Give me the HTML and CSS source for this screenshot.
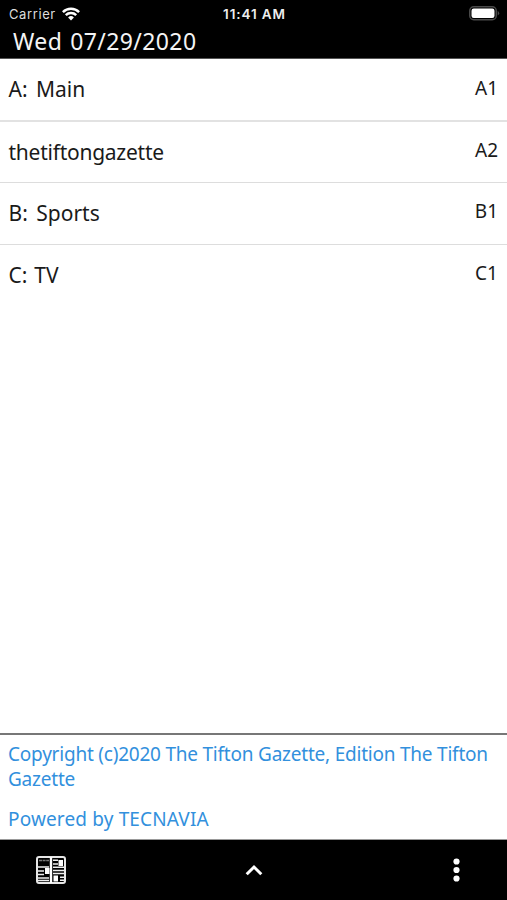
FILE: index.html
```html
<!DOCTYPE html>
<html lang="en">

<head>
    <meta charset="utf-8">
    <meta name="viewport" content="width=device-width,initial-scale=1.0">
    <title>The Tifton Gazette</title>
    <link rel="stylesheet" href="styles.css">
</head>

<body>
    <header>
        <div class="status">
            <div class="carrier">
                <span>Carrier</span>
                <svg class="wifi" viewBox="0 0 18 14" width="18" height="14">
                    <g fill="none" stroke="#fff" stroke-width="2.5">
                        <path d="M.9 5.1a11.6 11.6 0 0 1 16.2 0" />
                        <path d="M3.8 8.2a7.4 7.4 0 0 1 10.4 0" />
                    </g>
                    <path d="M9 13.5 6.1 10.5a4.2 4.2 0 0 1 5.8 0z" fill="#fff" />
                </svg>
            </div>
            <span class="time">11:41 AM</span>
            <svg class="battery" viewBox="0 0 31 15" width="31" height="15">
                <rect x=".75" y=".75" width="26.5" height="13" rx="4" fill="none" stroke="#4a4a4a" stroke-width="1.5" />
                <rect x="2.5" y="2.5" width="23" height="9.5" rx="2.2" fill="#fff" />
                <path d="M28.7 4.8q3 2.4 0 4.8z" fill="#4a4a4a" />
            </svg>
        </div>
        <h1 class="date">Wed 07/29/2020</h1>
    </header>

    <ul class="sections">
        <li><span class="name">A: Main</span><span class="page">A1</span></li>
        <li><span class="name long">thetiftongazette</span><span class="page">A2</span></li>
        <li><span class="name">B: Sports</span><span class="page">B1</span></li>
        <li><span class="name short">C: TV</span><span class="page">C1</span></li>
    </ul>

    <div class="credits">
        <p class="copyright">Copyright (c)2020 The Tifton Gazette, Edition The Tifton Gazette</p>
        <p class="powered">Powered by TECNAVIA</p>
    </div>

    <nav class="toolbar">
        <svg class="paper" viewBox="0 0 30 28" width="30" height="28">
            <rect x="1" y="1" width="28" height="26" rx="2" fill="none" stroke="#e6e6e6" stroke-width="2" />
            <path d="M15 1v26" stroke="#fff" stroke-width="2.4" />
            <path d="M3 4.5h10" stroke="#777" stroke-width="1.6" stroke-dasharray="3 .6" />
            <path d="M2 11h11M2 15h6M2 18.5h6M2 22h11M2 24.6h11M17 4.3h5M17 8h5M17 11.2h11M17 14.4h11M17 17.6h11M24 21.3h4M24 24.3h4" stroke="#eee" stroke-width="1.5" />
            <path d="M9 12h4.5v6H9zM22.5 4H27v6h-4.5zM17.5 19.5H22v6h-4.5z" fill="#fff" />
        </svg>
        <svg class="up" viewBox="0 0 18 12" width="18" height="12">
            <path d="M1.7 10.3 9 3l7.3 7.3" fill="none" stroke="#fff" stroke-width="3" />
        </svg>
        <svg class="more" viewBox="0 0 8 24" width="8" height="24">
            <g fill="#fff">
                <circle cx="4.5" cy="3.5" r="3.1" />
                <circle cx="4.5" cy="12" r="3.1" />
                <circle cx="4.5" cy="20.5" r="3.1" />
            </g>
        </svg>
    </nav>
</body>

</html>
```
FILE: styles.css
```css
* {
    box-sizing: border-box;
}

body {
    margin: 0;
    height: 100vh;
    display: flex;
    flex-direction: column;
    background: #fff;
    color: #1a1a1a;
    font-family: "Noto Sans", "Open Sans", sans-serif;
}

header {
    height: 59px;
    background: #000;
    color: #f4f4f4;
    border-bottom: 1px solid #555;
}

.status {
    display: grid;
    grid-template-columns: 1fr auto 1fr;
    align-items: center;
    height: 27px;
    padding: 0 7px 0 9px;
    font-family: Inter, sans-serif;
    font-size: 13px;
}

.carrier {
    display: flex;
    align-items: center;
    gap: 6px;
    color: #ddd;
    letter-spacing: .6px;
}

.time {
    font-size: 13.5px;
    font-weight: 600;
    letter-spacing: .9px;
    color: #eee;
}

.battery {
    justify-self: end;
}

.date {
    margin: 0;
    padding-left: 13px;
    font-size: 23px;
    font-weight: 400;
    letter-spacing: .4px;
    word-spacing: 1.5px;
    line-height: 29px;
}

.sections {
    list-style: none;
    margin: 0;
    padding: 0;
    flex: 1;
}

.sections li {
    display: flex;
    justify-content: space-between;
    height: 61.7px;
    padding: 0 9px 0 8.5px;
    border-bottom: 1px solid #ddd;
    line-height: 60px;
}

.sections li:first-child {
    height: 62.5px;
    border-bottom: 2px solid #e2e2e2;
    line-height: 61px;
}

.sections li:last-child {
    border-bottom: none;
}

.name {
    font-size: 21px;
    word-spacing: 3px;
}

.name.long {
    letter-spacing: -.25px;
}

.name.short {
    word-spacing: 1.5px;
}

.page {
    font-size: 19px;
    line-height: 57px;
}

.sections li:first-child .page {
    line-height: 58px;
}

.credits {
    height: 107px;
    padding: 7px 8px 0;
    border-top: 2px solid #777;
    border-bottom: 1px solid #999;
    color: #3290dd;
    font-size: 19px;
    line-height: 25px;
}

.credits p {
    margin: 0 0 15px;
}

.copyright {
    letter-spacing: -.22px;
}

.powered {
    letter-spacing: .15px;
}

.toolbar {
    display: grid;
    grid-template-columns: 1fr auto 1fr;
    align-items: center;
    height: 60px;
    padding: 0 36px;
    background: #000;
}

.more {
    justify-self: end;
    margin-right: 11px;
}
```
